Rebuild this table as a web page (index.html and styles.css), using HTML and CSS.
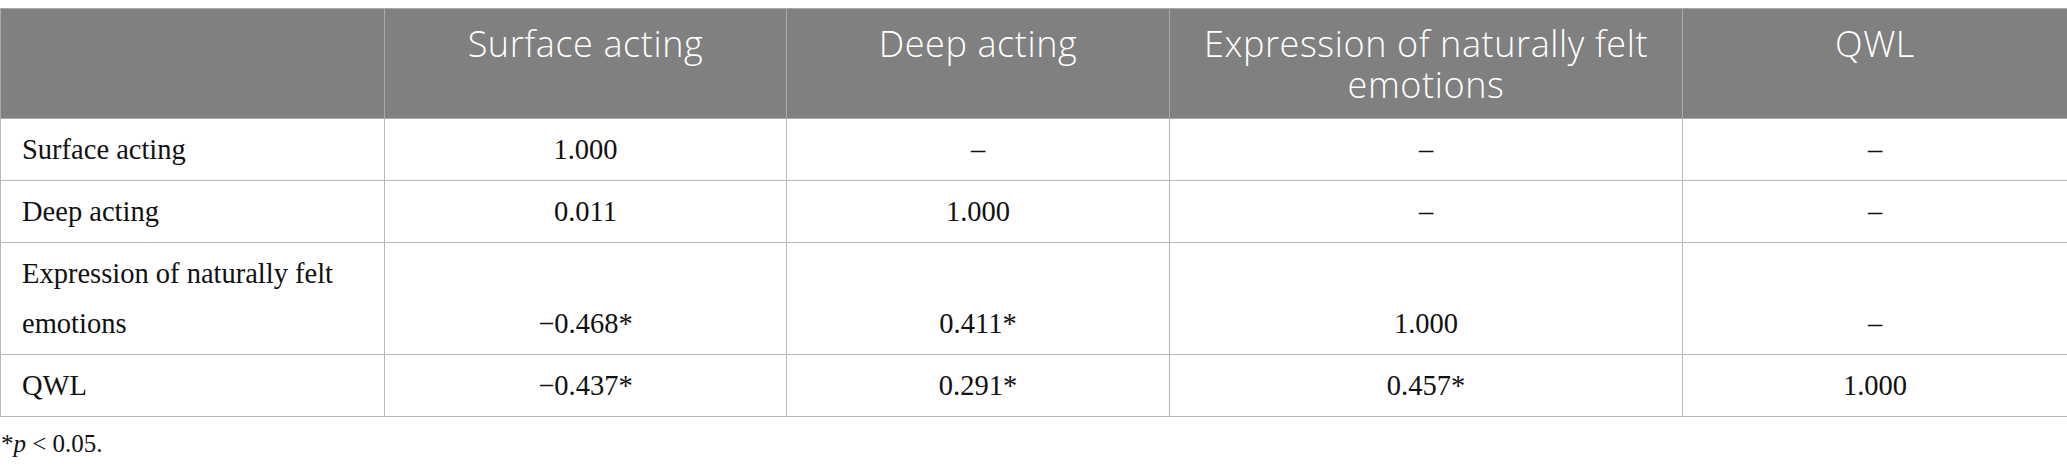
FILE: index.html
```html
<!DOCTYPE html>
<html lang="en">
<head>
<meta charset="utf-8">
<title>Correlations</title>
<link rel="stylesheet" href="styles.css">
</head>
<body>
<div class="wrap">
<table class="corr">
  <colgroup>
    <col class="c1"><col class="c2"><col class="c3"><col class="c4"><col class="c5">
  </colgroup>
  <thead>
    <tr>
      <th></th>
      <th>Surface acting</th>
      <th>Deep acting</th>
      <th>Expression of naturally felt emotions</th>
      <th>QWL</th>
    </tr>
  </thead>
  <tbody>
    <tr>
      <td class="lbl">Surface acting</td>
      <td>1.000</td>
      <td>–</td>
      <td>–</td>
      <td>–</td>
    </tr>
    <tr>
      <td class="lbl">Deep acting</td>
      <td>0.011</td>
      <td>1.000</td>
      <td>–</td>
      <td>–</td>
    </tr>
    <tr>
      <td class="lbl">Expression of naturally felt emotions</td>
      <td>−0.468*</td>
      <td>0.411*</td>
      <td>1.000</td>
      <td>–</td>
    </tr>
    <tr>
      <td class="lbl">QWL</td>
      <td>−0.437*</td>
      <td>0.291*</td>
      <td>0.457*</td>
      <td>1.000</td>
    </tr>
  </tbody>
</table>
<p class="note">*<i>p</i> &lt; 0.05.</p>
</div>
</body>
</html>
```

FILE: styles.css
```css
html, body {
  margin: 0;
  padding: 0;
  background: #ffffff;
}

.wrap {
  padding-top: 8px;
}

.corr {
  width: 2067px;
  table-layout: fixed;
  border-collapse: collapse;
  font-family: "Liberation Serif", "Times New Roman", serif;
  color: #111111;
}

.c1 { width: 384px; }
.c2 { width: 402px; }
.c3 { width: 383px; }
.c4 { width: 513px; }
.c5 { width: 385px; }

.corr th {
  background: #7f807f;
  color: #ffffff;
  font-family: "Open Sans", "Noto Sans", sans-serif;
  font-weight: 350;
  font-size: 36px;
  letter-spacing: 0.6px;
  line-height: 41px;
  text-align: center;
  vertical-align: top;
  padding: 14px 14px 13px;
  border: 1px solid #a9a9a9;
}

.corr td {
  font-size: 28.5px;
  line-height: 50px;
  text-align: center;
  vertical-align: bottom;
  padding: 6px 20px 5px;
  border: 1px solid #b8b8b8;
}

.corr td.lbl {
  text-align: left;
  padding-left: 21px;
}

.note {
  margin: 13px 0 0 1px;
  font-family: "Liberation Serif", "Times New Roman", serif;
  font-size: 25px;
  color: #111111;
}
```
